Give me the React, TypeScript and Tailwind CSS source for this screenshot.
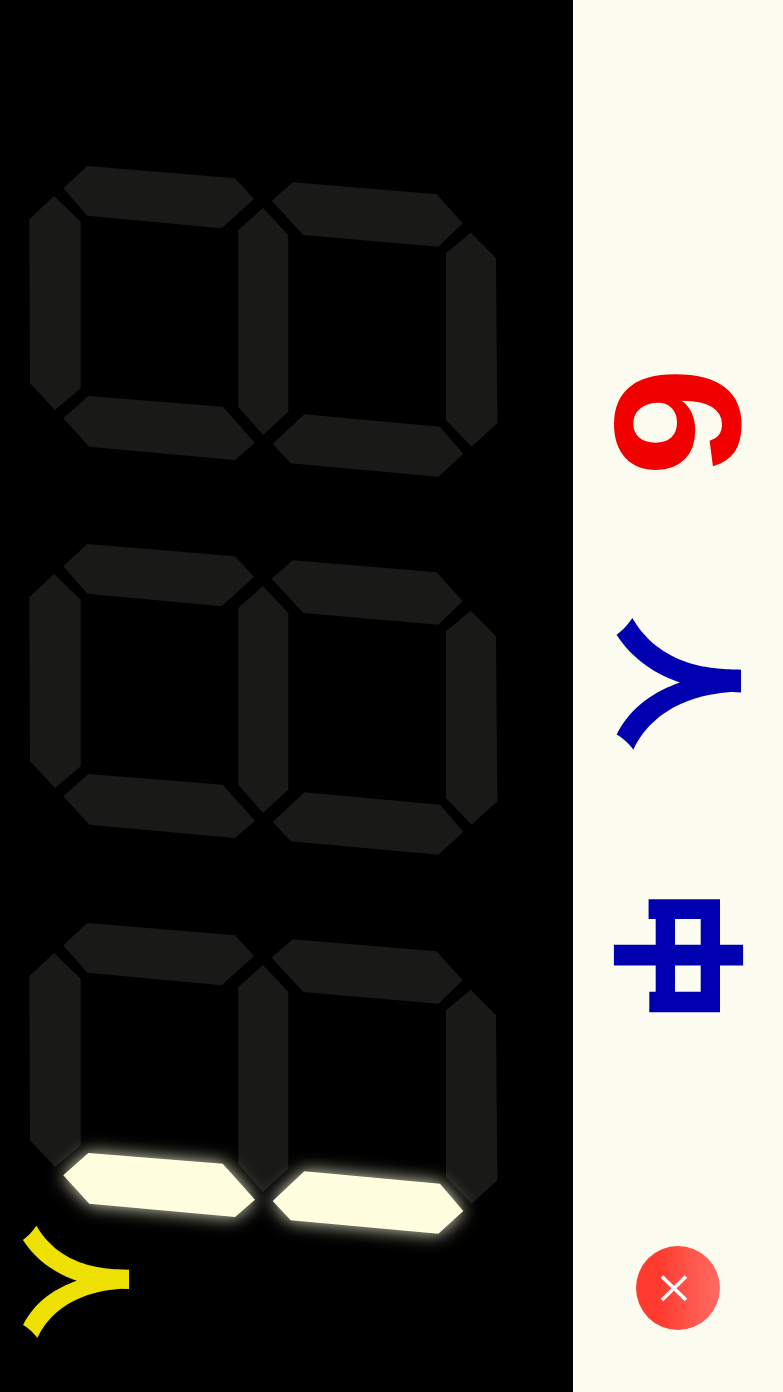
import React from 'react';

const CJK = 'font-["Noto_Sans_CJK_JP",sans-serif]';

const segments = {
  leftTop: '63.3,188.3 87.3,166 235,178.3 254,199 221.7,228.3 87.3,215.7',
  leftSide: '29.3,219.3 54,196 80.7,221.7 80.7,388.3 55,410 30,383.3',
  leftBottom: '63.3,418.3 88.3,396 222.7,406.7 255,442.7 235,460 89.3,446.7',
  center: '238.3,230 263,208 288.3,235 288.3,411.7 263,435 238.3,406.7',
  rightTop: '271.7,200.7 292.7,182.3 436.7,194.3 462.7,223.3 438.3,246.7 303.3,235',
  rightSide: '446,253.3 470.7,232.7 496,258.3 497.3,423.3 471.7,446.7 446,420',
  rightBottom: '272.7,444 304.3,414.3 440,426.7 463.3,454 438.3,476.7 290.7,463.3',
};

const SegmentGroup = ({ lit = false }: { lit?: boolean }) => (
  <svg viewBox="0 150 573 378.35" className="block w-[573px] h-[378.35px] shrink-0 overflow-visible">
    <g fill="#191917" className="blur-[0.6px]">
      <polygon points={segments.leftTop} />
      <polygon points={segments.leftSide} />
      <polygon points={segments.center} />
      <polygon points={segments.rightTop} />
      <polygon points={segments.rightSide} />
      {!lit && <polygon points={segments.leftBottom} />}
      {!lit && <polygon points={segments.rightBottom} />}
    </g>
    {lit && (
      <g fill="#ffffe0" className="blur-[0.6px] drop-shadow-[0_0_9px_rgba(255,255,224,0.9)]">
        <polygon points={segments.leftBottom} />
        <polygon points={segments.rightBottom} />
      </g>
    )}
  </svg>
);

export default function App() {
  return (
    <div className="w-[783px] h-[1392px] flex">
      <div className="relative w-[573px] h-[1392px] bg-black flex flex-col pt-[150px]">
        <SegmentGroup />
        <SegmentGroup />
        <div className="h-[335px]">
          <SegmentGroup lit />
        </div>
        <span className={`absolute left-[25px] top-[1224px] rotate-90 text-[115px] leading-none font-black text-[#eee000] ${CJK}`}>
          人
        </span>
      </div>
      <div className="w-[210px] h-[1392px] bg-[#fcfcf0] flex flex-col items-center pt-[336px]">
        <div className={`h-[172px] flex items-center justify-center rotate-90 scale-x-110 text-[180px] leading-none font-bold text-[#f00000] font-["Liberation_Sans",sans-serif]`}>
          6
        </div>
        <div className={`mt-[108px] h-[135px] ml-[16px] flex items-center justify-center rotate-90 text-[135px] leading-none font-black text-[#0000b0] ${CJK}`}>
          人
        </div>
        <div className={`mt-[137px] h-[135px] ml-[15px] flex items-center justify-center rotate-90 text-[135px] leading-none font-black text-[#0000b0] ${CJK}`}>
          中
        </div>
        <button className="mt-[223px] w-[84px] h-[84px] rounded-full bg-linear-to-r from-[#ff3b30] from-30% to-[#ff6b63] flex items-center justify-center">
          <svg viewBox="0 0 28 28" className="w-7 h-7 -translate-x-1" fill="none" stroke="#ffffff" strokeWidth="3.6">
            <path d="M2 2.5 26 26M26 2.5 2 26" />
          </svg>
        </button>
      </div>
    </div>
  );
}
